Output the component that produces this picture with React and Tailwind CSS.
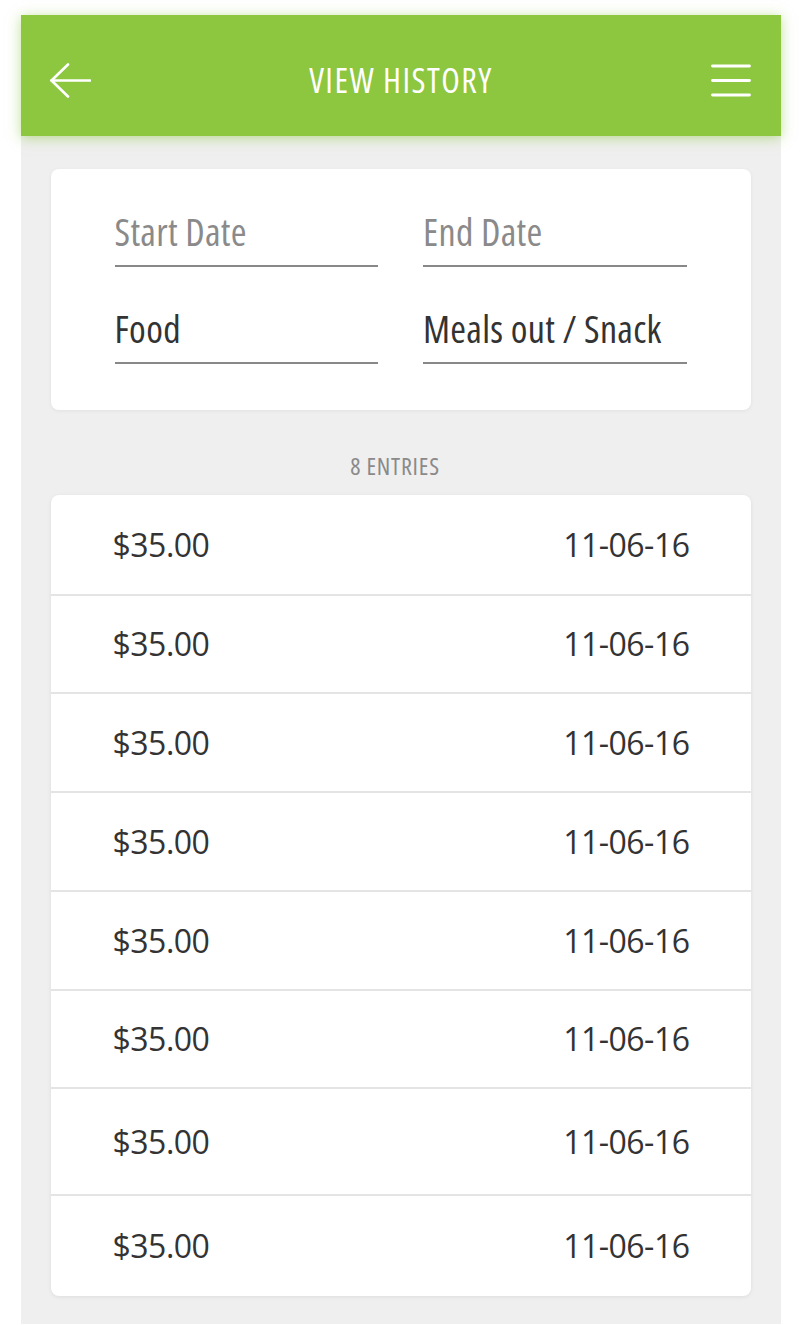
import React from "react";

const entries = [
  { amount: "$35.00", date: "11-06-16", h: "h-[101px]" },
  { amount: "$35.00", date: "11-06-16", h: "h-[98px]" },
  { amount: "$35.00", date: "11-06-16", h: "h-[99px]" },
  { amount: "$35.00", date: "11-06-16", h: "h-[99px]" },
  { amount: "$35.00", date: "11-06-16", h: "h-[99px]" },
  { amount: "$35.00", date: "11-06-16", h: "h-[98px]" },
  { amount: "$35.00", date: "11-06-16", h: "h-[107px]" },
  { amount: "$35.00", date: "11-06-16", h: "h-[100px]" },
];

const Field = ({ label, placeholder }) => (
  <div className="border-b-2 border-[#888888] pb-[11px]">
    <span
      className={`block text-[38px] leading-[46px] tracking-[0.3px] [font-stretch:75%] ${
        placeholder ? "text-[#8a8a8a]" : "text-[#333333]"
      }`}
    >
      {label}
    </span>
  </div>
);

const App = () => {
  return (
    <div
      className="min-h-screen bg-white pt-[15px]"
      style={{ fontFamily: '"Open Sans", "Liberation Sans", sans-serif' }}
    >
      <div className="mx-auto w-[760px] bg-[#efefef] pb-[28px]">
        {/* Header */}
        <header className="relative z-10 flex h-[121px] items-center justify-between bg-[#8dc63f] px-[29px] pt-[9px] shadow-[0_2px_12px_rgba(141,198,63,0.55)]">
          <svg width="41" height="35" viewBox="0 0 41 35" fill="none" stroke="white" strokeWidth="2.6" strokeLinecap="round" strokeLinejoin="round">
            <path d="M1.5 17.5H40" />
            <path d="M18 1.5L1.5 17.5L18 33.5" />
          </svg>
          <h1 className="text-[34px] leading-none tracking-[1.5px] text-white [font-stretch:75%]">
            VIEW HISTORY
          </h1>
          <svg width="40" height="33" viewBox="0 0 40 33" fill="none" stroke="white" strokeWidth="2.8" strokeLinecap="round">
            <path d="M1.5 2H38.5" />
            <path d="M1.5 16.5H38.5" />
            <path d="M1.5 31H38.5" />
          </svg>
        </header>

        <div className="px-[30px] pt-[33px]">
          {/* Filters */}
          <div className="rounded-[8px] bg-white px-[64px] pb-[46px] pt-[39px] shadow-[0_1px_4px_rgba(0,0,0,0.06)]">
            <div className="grid grid-cols-2 gap-x-[45px] gap-y-[38px]">
              <Field label="Start Date" placeholder />
              <Field label="End Date" placeholder />
              <Field label="Food" />
              <Field label="Meals out / Snack" />
            </div>
          </div>

          <p className="pb-[16px] pr-[11px] pt-[43px] text-center text-[24px] leading-[26px] tracking-[0.8px] text-[#8a8a8a] [font-stretch:75%]">
            8 ENTRIES
          </p>

          {/* Entries */}
          <div className="overflow-hidden rounded-[8px] bg-white shadow-[0_1px_4px_rgba(0,0,0,0.08)]">
            {entries.map((entry, i) => (
              <div
                key={i}
                className={`flex items-center justify-between pl-[62px] pr-[61px] text-[32px] tracking-[-0.5px] text-[#333333] ${entry.h} ${
                  i < entries.length - 1 ? "border-b-2 border-[#e4e4e4]" : ""
                }`}
              >
                <span>{entry.amount}</span>
                <span>{entry.date}</span>
              </div>
            ))}
          </div>
        </div>
      </div>
    </div>
  );
};

export default App;
